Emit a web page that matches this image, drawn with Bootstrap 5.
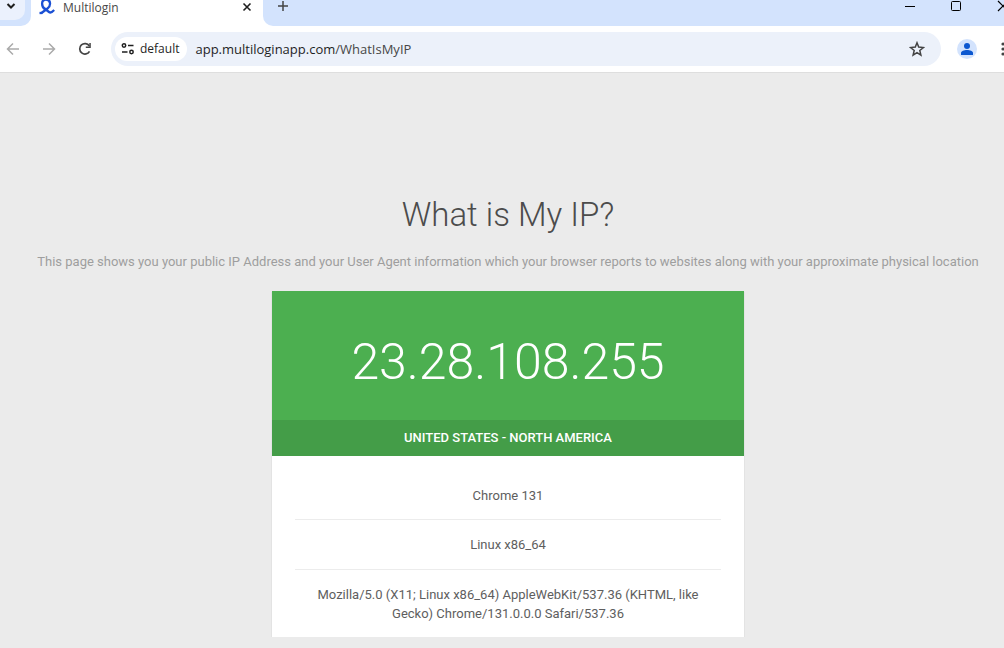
<!DOCTYPE html>
<html lang="en">
<head>
<meta charset="utf-8">
<meta name="viewport" content="width=device-width, initial-scale=1">
<title>Multilogin</title>
<link rel="stylesheet" href="https://cdn.jsdelivr.net/npm/bootstrap@5.3.0/dist/css/bootstrap.min.css">
<script src="https://cdn.jsdelivr.net/npm/bootstrap@5.3.0/dist/js/bootstrap.bundle.min.js" defer></script>
<style>
  html { overflow: hidden; }
  body { font-family: Roboto, "Liberation Sans", sans-serif; font-size: 13px; color: #5e5e5e; background: #ebebeb; }
  svg { display: block; flex: none; }
  button { border: 0; padding: 0; background: none; color: inherit; display: flex; align-items: center; justify-content: center; }
  /* the window runs a little past the right edge of the screen */
  .window { margin-right: -12px; }
  .chrome-ui { font-family: "Open Sans", "Noto Sans", sans-serif; font-size: 12px; color: #1f1f1f; }
  .tabstrip { height: 26px; }
  .strip-start { width: 31px; background: #d3e3fd; border-bottom-right-radius: 10px; }
  .tab-search { width: 25px; height: 20px; padding: 0 3px 8px 0; background: #ebf1fd; border-bottom-right-radius: 10px; }
  .active-tab { width: 232px; padding: 0 11px 10px 8px; }
  .tab-title { font-size: 12px; line-height: 16px; color: #474747; }
  .strip-end { background: #d3e3fd; border-bottom-left-radius: 10px; padding: 0 7px 14px 14px; }
  .toolbar { height: 46px; padding: 0 6px 0 5px; }
  .toolbar-actions { gap: 20px; }
  .omnibox { height: 34px; border-radius: 17px; background: #ecf1fa; margin-left: 18px; padding: 0 16px 0 4px; }
  .site-chip { height: 24px; border-radius: 12px; background: #fff; padding: 0 8px 0 5px; gap: 4px; font-weight: 500; line-height: 18px; }
  .address { font-size: 13px; line-height: 20px; color: #474747; min-width: 0; padding: 0 8px; }
  .host { color: #1f1f1f; text-decoration: none; }
  .avatar { width: 20px; height: 20px; border-radius: 50%; background: #d3e3fd; }
  .page { border-top: 1px solid #dedede; padding-top: 120px; }
  .page-title { font-size: 33px; line-height: 44px; font-weight: 300; color: #4c4c4c; margin-bottom: 15px; }
  .page-lead { line-height: 20px; color: #9e9e9e; margin-bottom: 19px; }
  .ip-card { width: 472px; background: #fff; box-shadow: 0 1px 1px rgba(0,0,0,.2); }
  .ip-value { background: #4caf50; color: #fff; font-size: 50px; line-height: 61px; font-weight: 300; padding: 41px 0 27px; }
  .ip-place { background: #449d48; color: #fff; font-weight: 500; line-height: 20px; padding: 8px 0; }
  .facts { margin: 0 23px; padding: 15px 0 0; line-height: 19px; }
  .facts li { padding: 15px 20px; }
  .facts li + li { border-top: 1px solid #ececec; }
  .facts li:first-child, .facts li:last-child { padding-bottom: 14px; }
</style>
</head>
<body>
<div class="window">
  <header class="chrome-ui bg-white">
    <div class="tabstrip d-flex">
      <div class="strip-start">
        <button class="tab-search" aria-label="Search tabs">
          <svg width="10" height="8" viewBox="0 0 10 8"><path d="M1.500 2 5 5.500 8.500 2" fill="none" stroke="#1f1f1f" stroke-width="2"/></svg>
        </button>
      </div>
      <div class="active-tab d-flex align-items-center">
        <svg width="16" height="16" viewBox="0 0 16 16"><g fill="none" stroke="#1b50d4" stroke-width="2.300"><path d="M6 9.300C2.200 6.500 1.800-.5 7-.5S12 6 8.500 8.500L2.500 13"/><path d="M5.500 8.500 10 12c1.600 1.200 3 .5 5.200-2"/><path d="M.5 13h2.800"/></g></svg>
        <span class="tab-title ms-2 flex-grow-1">Multilogin</span>
        <button aria-label="Close tab"><svg width="10" height="12" viewBox="0 0 10 12"><path d="m1.500 1.500 7 7m0-7-7 7" stroke="#1f1f1f" stroke-width="1.600"/></svg></button>
      </div>
      <div class="strip-end d-flex align-items-center flex-grow-1">
        <button class="me-auto" aria-label="New tab"><svg width="12" height="12" viewBox="0 0 12 12"><path d="M6 1v10M1 6h10" stroke="#444" stroke-width="1.500"/></svg></button>
        <div class="d-flex">
          <button aria-label="Minimize"><svg width="10" height="12" viewBox="0 0 10 12"><path d="M0 6.500h10" stroke="#000"/></svg></button>
          <button class="ms-4" aria-label="Maximize"><svg width="58" height="12" viewBox="0 0 58 12"><rect x="12.500" y="1.500" width="9" height="9" rx="1" fill="none" stroke="#000"/></svg></button>
          <button aria-label="Close window"><svg width="12" height="12" viewBox="0 0 12 12"><path d="m1 1 10 10M11 1 1 11" stroke="#000" stroke-width="1.200"/></svg></button>
        </div>
      </div>
    </div>
    <div class="toolbar d-flex align-items-center">
      <div class="toolbar-actions d-flex">
        <button aria-label="Back" disabled><svg width="16" height="16" viewBox="0 0 16 16"><path d="M14 8H3M8 2.500 2.500 8 8 13.500" fill="none" stroke="#aaa" stroke-width="1.500"/></svg></button>
        <button aria-label="Forward" disabled><svg width="16" height="16" viewBox="0 0 16 16"><path d="M2 8h11M8 2.500 13.500 8 8 13.500" fill="none" stroke="#aaa" stroke-width="1.500"/></svg></button>
        <button aria-label="Reload"><svg width="16" height="16" viewBox="0 0 16 16"><path d="M12.500 10.300A5.200 5.200 0 1 1 12.300 5" fill="none" stroke="#444" stroke-width="1.700"/><path d="M13.800 2v5H8.800V5.400h3.500V2z" fill="#444"/></svg></button>
      </div>
      <div class="omnibox d-flex align-items-center flex-grow-1">
        <button class="site-chip"><svg width="16" height="16" viewBox="0 0 16 16"><g fill="none" stroke="#1f1f1f" stroke-width="1.500"><circle cx="4" cy="4.500" r="1.700"/><path d="M8 4.500h5.500M2 11h5.500"/><circle cx="11.500" cy="11" r="1.700"/></g></svg>default</button>
        <div class="address flex-grow-1"><a class="host" href="#">app.multiloginapp.com</a>/WhatIsMyIP</div>
        <button aria-label="Bookmark this page"><svg width="16" height="16" viewBox="0 0 16 16"><path d="m8 1.800 1.700 4.300 4.700.4-3.600 3 1.100 4.600L8 11.700l-3.900 2.400 1.100-4.600-3.600-3 4.700-.4z" fill="none" stroke="#444" stroke-width="1.500"/></svg></button>
      </div>
      <button class="avatar mx-3" aria-label="Profile"><svg width="14" height="14" viewBox="0 0 14 14"><circle cx="7" cy="4" r="3" fill="#0b57d0"/><path d="M1 13v-2c0-2 3-3 6-3s6 1 6 3v2z" fill="#0b57d0"/></svg></button>
      <button aria-label="Menu"><svg width="17" height="16" viewBox="0 0 17 16"><g fill="#444"><circle cx="10" cy="3" r="1.600"/><circle cx="10" cy="8" r="1.600"/><circle cx="10" cy="13" r="1.600"/></g></svg></button>
    </div>
  </header>
  <main class="page text-center">
    <h1 class="page-title">What is My IP?</h1>
    <p class="page-lead">This page shows you your public IP Address and your User Agent information which your browser reports to websites along with your approximate physical location</p>
    <section class="ip-card mx-auto">
      <div class="ip-value">23.28.108.255</div>
      <div class="ip-place text-uppercase">United States - North America</div>
      <ul class="facts list-unstyled">
        <li>Chrome 131</li>
        <li>Linux x86_64</li>
        <li>Mozilla/5.0 (X11; Linux x86_64) AppleWebKit/537.36 (KHTML, like Gecko) Chrome/131.0.0.0 Safari/537.36</li>
      </ul>
    </section>
  </main>
</div>
</body>
</html>
